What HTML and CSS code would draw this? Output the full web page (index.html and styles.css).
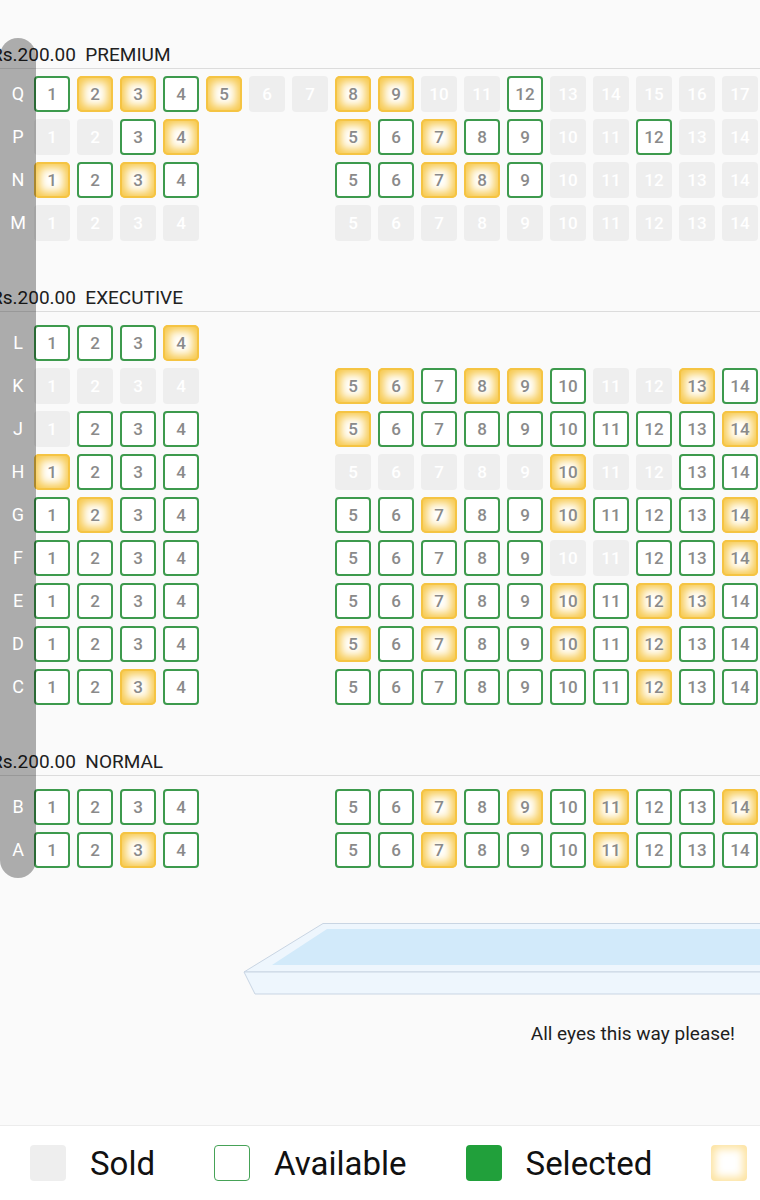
FILE: index.html
```html
<!DOCTYPE html>
<html lang="en">
<head>
  <meta charset="UTF-8">
  <meta name="viewport" content="width=device-width, initial-scale=1.0">
  <title>Select Seats</title>
  <link rel="stylesheet" href="styles.css">
</head>
<body>
  <div class="seat-map">
    <div class="row-rail"></div>
    <div id="sections">
      <!-- sections get built by the script -->
    </div>
  </div>

  <div class="screen">
    <svg width="522" height="82" viewBox="0 0 522 82">
      <polygon points="83,5.5 522,5.5 522,54 4,54" fill="#eef6fd" stroke="#c9d5e3" stroke-width="1"/>
      <polygon points="4,54 522,54 522,76 15,76" fill="#eef6fd" stroke="#c9d5e3" stroke-width="1"/>
      <polygon points="87,11 522,11 522,47 32,47" fill="#d2eafa"/>
    </svg>
  </div>
  <p class="screen-note">All eyes this way please!</p>

  <div class="legend">
    <div class="legend-item"><span class="swatch sold"></span>Sold</div>
    <div class="legend-item"><span class="swatch available"></span>Available</div>
    <div class="legend-item"><span class="swatch selected"></span>Selected</div>
    <div class="legend-item"><span class="swatch reserved"></span>Reserved</div>
  </div>

  <script>
    // A = available, S = sold, Y = reserved, . = no seat
    const sections = [
      { price: 'Rs.200.00', name: 'PREMIUM', first: true, rows: [
        ['Q', 'AYYAYSSYYSSASSSSS'],
        ['P', 'SSAY...YAYAASSASS'],
        ['N', 'YAYA...AAYYASSSSS'],
        ['M', 'SSSS...SSSSSSSSSS']
      ]},
      { price: 'Rs.200.00', name: 'EXECUTIVE', rows: [
        ['L', 'AAAY'],
        ['K', 'SSSS...YYAYYASSYA'],
        ['J', 'SAAA...YAAAAAAAAY'],
        ['H', 'YAAA...SSSSSYSSAA'],
        ['G', 'AYAA...AAYAAYAAAY'],
        ['F', 'AAAA...AAAAASSAAY'],
        ['E', 'AAAA...AAYAAYAYYA'],
        ['D', 'AAAA...YAYAAYAYAA'],
        ['C', 'AAYA...AAAAAAAYAA']
      ]},
      { price: 'Rs.200.00', name: 'NORMAL', rows: [
        ['B', 'AAAA...AAYAYAYAAY'],
        ['A', 'AAYA...AAYAAAYAAA']
      ]}
    ];

    const statusClass = { A: 'available', S: 'sold', Y: 'reserved' };

    function buildSection(section) {
      const el = document.createElement('div');
      el.className = section.first ? 'section first' : 'section';

      const head = document.createElement('div');
      head.className = 'section-head';
      const title = document.createElement('span');
      title.textContent = `${section.price}  ${section.name}`;
      head.appendChild(title);
      el.appendChild(head);

      const rows = document.createElement('div');
      rows.className = 'rows';
      section.rows.forEach(([label, seats]) => {
        rows.appendChild(buildRow(label, seats));
      });
      el.appendChild(rows);
      return el;
    }

    function buildRow(label, seats) {
      const row = document.createElement('div');
      row.className = 'row';

      const name = document.createElement('div');
      name.className = 'row-label';
      name.textContent = label;
      row.appendChild(name);

      const grid = document.createElement('div');
      grid.className = 'seats';
      let num = 0;
      for (const ch of seats) {
        const cell = document.createElement('div');
        if (ch === '.') {
          cell.className = 'seat-gap';
        } else {
          num++;
          cell.className = 'seat ' + statusClass[ch];
          cell.textContent = num;
        }
        grid.appendChild(cell);
      }
      row.appendChild(grid);
      return row;
    }

    const holder = document.getElementById('sections');
    sections.forEach(s => holder.appendChild(buildSection(s)));
  </script>
</body>
</html>
```

FILE: styles.css
```css
*, *::before, *::after {
  box-sizing: border-box;
}

html, body {
  overflow-x: hidden;
}

body {
  margin: 0;
  min-height: 100vh;
  display: flex;
  flex-direction: column;
  background: #fafafa;
  color: #212121;
  font-family: Roboto, 'Noto Sans', sans-serif;
}

.seat-map {
  position: relative;
}

.row-rail {
  position: absolute;
  left: 0;
  top: 38px;
  width: 36px;
  height: 840px;
  border-radius: 18px;
  background: rgba(0, 0, 0, 0.31);
  z-index: 1;
}

.section-head {
  margin-top: 46px;
  padding-bottom: 2px;
  border-bottom: 1px solid #dcdcdc;
  font-size: 19px;
  line-height: 22px;
  white-space: pre;
}

.section.first .section-head {
  margin-top: 44px;
}

.section-head span {
  display: inline-block;
  margin-left: -9px;
}

.rows {
  display: flex;
  flex-direction: column;
  gap: 7px;
  padding-top: 13px;
}

.section.first .rows {
  padding-top: 7px;
}

.row {
  display: flex;
}

.row-label {
  position: relative;
  z-index: 2;
  width: 34px;
  flex: none;
  padding-left: 2px;
  color: #fff;
  font-size: 18px;
  line-height: 36px;
  text-align: center;
}

.seats {
  display: grid;
  grid-template-columns: repeat(17, 36px);
  gap: 7px;
}

.seat {
  width: 36px;
  height: 36px;
  border-radius: 4px;
  display: flex;
  align-items: center;
  justify-content: center;
  font-size: 17px;
  font-weight: 500;
  color: #8a8a8a;
}

.seat.available {
  background: #fff;
  border: 2px solid #3d9a4d;
}

.seat.sold {
  background: #eeeeee;
  color: #fff;
}

.seat.reserved {
  background: #fff;
  border-radius: 5px;
  box-shadow: inset 0 0 0 2px #f5c443, inset 0 0 10px 6px #f7c94d;
}

.screen {
  margin-top: 50px;
  padding-left: 240px;
  height: 82px;
}

.screen svg {
  display: block;
}

.screen-note {
  margin: 23px 0 0;
  padding-right: 25px;
  text-align: right;
  font-size: 19px;
  line-height: 22px;
  color: #1e1e1e;
}

.legend {
  margin-top: auto;
  height: 75px;
  display: flex;
  align-items: center;
  gap: 59px;
  padding-left: 30px;
  background: #fff;
  border-top: 1px solid #ececec;
  white-space: nowrap;
}

.legend-item {
  display: flex;
  align-items: center;
  gap: 24px;
  font-size: 33px;
  color: #111;
}

.swatch {
  width: 36px;
  height: 36px;
  flex: none;
  border-radius: 4px;
}

.swatch.sold {
  background: #eeeeee;
}

.swatch.available {
  background: #fff;
  border: 1.5px solid #46a257;
}

.swatch.selected {
  background: #21a03b;
}

.swatch.reserved {
  background: #fff;
  box-shadow: inset 0 0 8px 4px #fde3a0;
}
```
